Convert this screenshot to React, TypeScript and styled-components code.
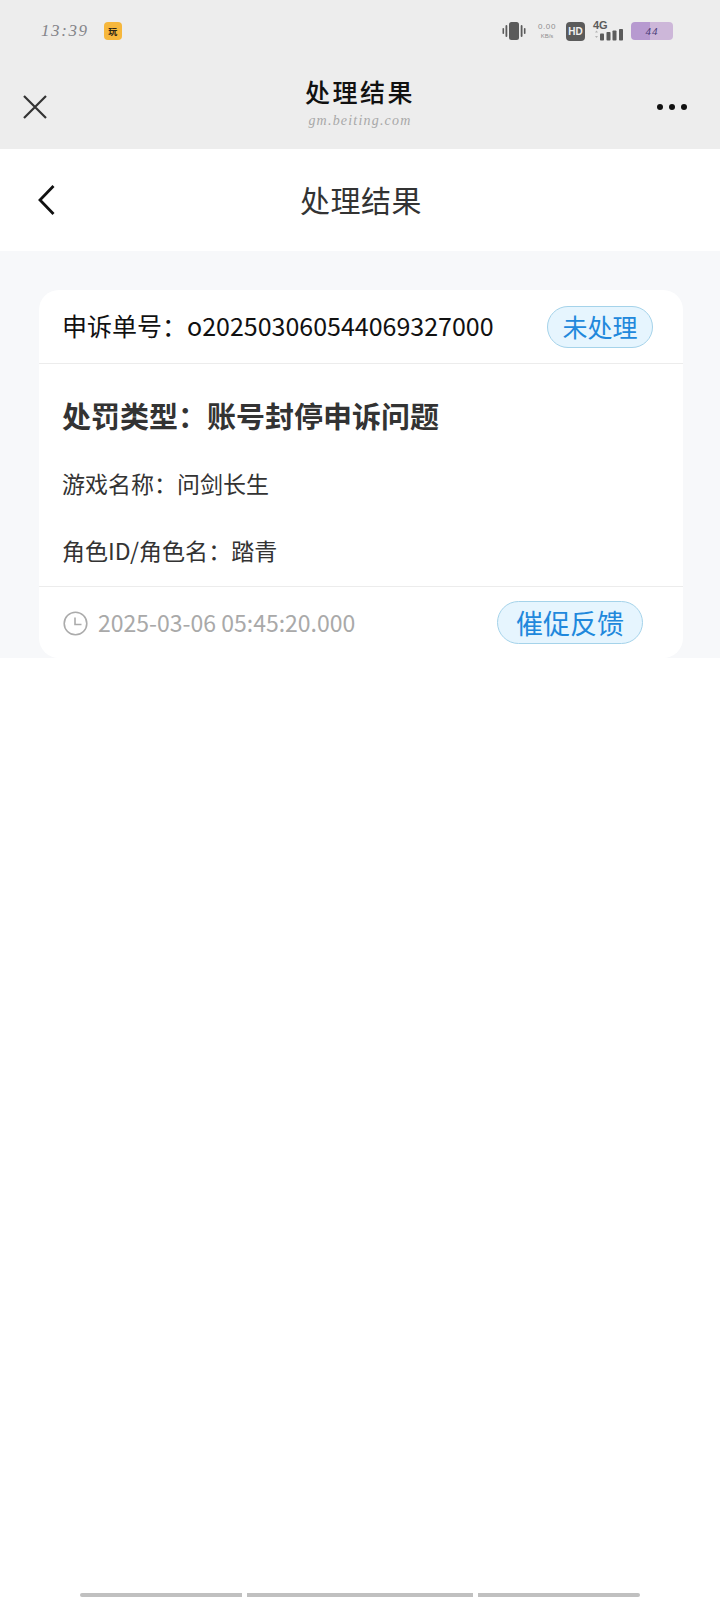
import React from "react";
import styled, { createGlobalStyle } from "styled-components";

const COLON = "\uFF1A";

const GlobalStyle = createGlobalStyle`
  html, body {
    margin: 0;
    padding: 0;
    background: #fff;
  }
  body {
    font-family: "Noto Sans CJK SC", "Noto Sans", sans-serif;
  }
`;

const Page = styled.div`
  width: 720px;
  height: 1600px;
  display: flex;
  flex-direction: column;
  overflow: hidden;
  background: #fff;
`;

const TopArea = styled.div`
  height: 149px;
  background: #ededed;
  display: flex;
  flex-direction: column;
`;

const StatusBar = styled.div`
  height: 60px;
  padding: 22px 47px 0 41px;
  box-sizing: border-box;
  display: flex;
  justify-content: space-between;
  align-items: flex-start;
`;

const StatusLeft = styled.div`
  display: flex;
  align-items: center;
  gap: 15px;
  height: 18px;
`;

const StatusRight = styled.div`
  display: flex;
  align-items: center;
  height: 18px;
  gap: 9px;
`;

const Clock = styled.span`
  font-family: "Liberation Serif", serif;
  font-style: italic;
  font-size: 17px;
  letter-spacing: 1.6px;
  color: #85858a;
  font-weight: 400;
`;

const AppBadge = styled.div`
  width: 18px;
  height: 18px;
  border-radius: 4px;
  background: #f6b73c;
  display: flex;
  align-items: center;
  justify-content: center;
  color: #2d2414;
  font-size: 9px;
  font-weight: 700;
  line-height: 1;
  overflow: hidden;
`;

const Speed = styled.div`
  width: 20px;
  display: flex;
  flex-direction: column;
  align-items: center;
  gap: 2px;
  margin: 0 0 0 2px;
  font-family: "Liberation Sans", sans-serif;
  color: #8d8d8d;
  line-height: 1;
`;

const SpeedValue = styled.span`
  font-size: 8px;
  letter-spacing: 0.6px;
`;

const SpeedUnit = styled.span`
  font-size: 6px;
`;

const HdBadge = styled.div`
  width: 19px;
  height: 19px;
  border-radius: 4px;
  background: #5b5b5b;
  color: #f0f0f0;
  display: flex;
  align-items: center;
  justify-content: center;
  font-family: "Liberation Sans", sans-serif;
  font-size: 10px;
  font-weight: 700;
`;

const Signal = styled.div`
  position: relative;
  width: 31px;
  height: 20px;
  margin: 0 -2px 0 -1px;
`;

const FourG = styled.span`
  position: absolute;
  left: 0;
  top: -2px;
  font-family: "Liberation Sans", sans-serif;
  font-size: 11px;
  font-weight: 700;
  color: #5b5b5b;
  line-height: 12px;
`;

const Battery = styled.div`
  width: 42px;
  height: 18px;
  border-radius: 4px;
  background: linear-gradient(90deg, #b79ad0 0 46%, #cdb7d9 46% 100%);
  display: flex;
  align-items: center;
  justify-content: center;
  font-family: "Liberation Serif", serif;
  font-style: italic;
  font-size: 11px;
  letter-spacing: 1px;
  color: #4a3a78;
`;

const NavBar = styled.div`
  flex: 1;
  display: grid;
  grid-template-columns: 1fr auto 1fr;
  align-items: center;
  padding: 0 33px 0 33px;
`;

const NavLeft = styled.div`
  display: flex;
  margin-left: -10px;
  padding-top: 5px;
`;

const NavRight = styled.div`
  display: flex;
  justify-content: flex-end;
  padding-top: 5px;
`;

const NavCenter = styled.div`
  display: flex;
  flex-direction: column;
  align-items: center;
  margin-top: -4px;
`;

const NavTitle = styled.div`
  font-size: 25px;
  font-weight: 500;
  line-height: 30px;
  letter-spacing: 2.5px;
  color: #111;
`;

const NavSub = styled.div`
  margin-top: 6px;
  font-family: "Liberation Serif", serif;
  font-style: italic;
  font-size: 14px;
  line-height: 18px;
  letter-spacing: 1.2px;
  color: #a8a8a8;
`;

const Dots = styled.div`
  display: flex;
  gap: 6px;
`;

const Dot = styled.span`
  width: 6px;
  height: 6px;
  border-radius: 50%;
  background: #111;
`;

const Header = styled.div`
  height: 102px;
  position: relative;
  display: flex;
  align-items: center;
  justify-content: center;
  background: #fff;
`;

const BackButton = styled.div`
  position: absolute;
  left: 36px;
  top: 35px;
  display: flex;
`;

const HeaderTitle = styled.h1`
  margin: -2px 0 0 2px;
  font-size: 30px;
  font-weight: 400;
  letter-spacing: 0.5px;
  color: #333;
  line-height: 44px;
`;

const Content = styled.div`
  height: 407px;
  padding: 39px 37px 0 39px;
  box-sizing: border-box;
  background: #f7f8fa;
`;

const Card = styled.div`
  height: 368px;
  background: #fff;
  border-radius: 20px;
  display: flex;
  flex-direction: column;
`;

const CardTop = styled.div`
  height: 74px;
  box-sizing: border-box;
  padding: 0 30px 4px 23px;
  display: flex;
  align-items: center;
  justify-content: space-between;
  border-bottom: 1px solid #ececec;
`;

const OrderNo = styled.div`
  font-size: 25px;
  color: #111;
  line-height: 36px;
`;

const Pill = styled.div<{ $large?: boolean }>`
  box-sizing: border-box;
  display: flex;
  align-items: center;
  justify-content: center;
  width: ${(p) => (p.$large ? "146px" : "106px")};
  height: ${(p) => (p.$large ? "43px" : "42px")};
  margin-top: ${(p) => (p.$large ? "2px" : "4px")};
  border-radius: 22px;
  border: 1px solid #a5d3ea;
  background: #e6f5fe;
  color: #2188dc;
  font-size: ${(p) => (p.$large ? "27px" : "25px")};
  line-height: 1;
`;

const CardBody = styled.div`
  flex: 1;
  padding: 0 23px;
  display: flex;
  flex-direction: column;
  border-bottom: 1px solid #ececec;
`;

const PunishType = styled.div`
  margin-top: 30px;
  font-size: 29px;
  line-height: 42px;
  font-weight: 700;
  color: #333;
`;

const InfoRow = styled.div`
  font-size: 23px;
  line-height: 36px;
  color: #333;
  margin-top: 31px;

  &:first-of-type {
    margin-top: 0;
  }
`;

const InfoList = styled.div`
  margin-top: 29px;
  display: flex;
  flex-direction: column;
`;

const CardBottom = styled.div`
  height: 71px;
  box-sizing: border-box;
  padding: 0 40px 2px 24px;
  display: flex;
  align-items: center;
  justify-content: space-between;
`;

const TimeWrap = styled.div`
  display: flex;
  align-items: center;
  gap: 10px;
  color: #a9a9a9;
  font-size: 23px;
  line-height: 36px;
`;

const ClockSvg = styled.svg`
  margin-top: 3px;
`;

const Spacer = styled.div`
  flex: 1;
`;

const TabBars = styled.div`
  display: flex;
  gap: 5px;
  padding: 0 0 3px 80px;
`;

const TabBar = styled.div<{ $w: number; $pos?: "left" | "right" }>`
  width: ${(p) => p.$w}px;
  height: 4px;
  background: #c0c0c0;
  border-radius: ${(p) =>
    p.$pos === "left" ? "2px 0 0 2px" : p.$pos === "right" ? "0 2px 2px 0" : "0"};
`;

const VibrateIcon = () => (
  <svg width="24" height="20" viewBox="0 0 24 20" fill="none">
    <rect x="7" y="1" width="10" height="18" rx="2.5" fill="#5b5b5b" />
    <rect x="3.5" y="4" width="1.8" height="12" rx="0.9" fill="#5b5b5b" />
    <rect x="18.7" y="4" width="1.8" height="12" rx="0.9" fill="#5b5b5b" />
    <rect x="0.5" y="7" width="1.6" height="6" rx="0.8" fill="#5b5b5b" />
    <rect x="21.9" y="7" width="1.6" height="6" rx="0.8" fill="#5b5b5b" />
  </svg>
);

const SignalBars = () => (
  <svg width="31" height="20" viewBox="0 0 31 20" fill="none">
    <path d="M2 11.5l1.5-2 1.5 2zM2 15l1.5 2 1.5-2z" fill="#b5b5b5" />
    <rect x="7" y="12.5" width="4" height="7" rx="0.8" fill="#5b5b5b" />
    <rect x="13.5" y="11" width="4" height="8.5" rx="0.8" fill="#5b5b5b" />
    <rect x="19.5" y="9.5" width="4" height="10" rx="0.8" fill="#5b5b5b" />
    <rect x="26" y="8" width="4" height="11.5" rx="0.8" fill="#5b5b5b" />
  </svg>
);

const CloseIcon = () => (
  <svg width="24" height="24" viewBox="0 0 24 24" fill="none">
    <path d="M1 1l22 22M23 1L1 23" stroke="#333" strokeWidth="2.2" />
  </svg>
);

const BackIcon = () => (
  <svg width="22" height="32" viewBox="0 0 22 32" fill="none">
    <path d="M17.5 2L4 16l13.5 14" stroke="#111" strokeWidth="2.8" />
  </svg>
);

const ClockIcon = () => (
  <ClockSvg width="25" height="25" viewBox="0 0 25 25" fill="none">
    <circle cx="12.5" cy="12.5" r="11.3" stroke="#ababab" strokeWidth="1.6" />
    <path d="M12 6.5v7h6.5" stroke="#ababab" strokeWidth="1.6" />
  </ClockSvg>
);

export default function App() {
  return (
    <Page>
      <GlobalStyle />
      <TopArea>
        <StatusBar>
          <StatusLeft>
            <Clock>13:39</Clock>
            <AppBadge>玩</AppBadge>
          </StatusLeft>
          <StatusRight>
            <VibrateIcon />
            <Speed>
              <SpeedValue>0.00</SpeedValue>
              <SpeedUnit>KB/s</SpeedUnit>
            </Speed>
            <HdBadge>HD</HdBadge>
            <Signal>
              <FourG>4G</FourG>
              <SignalBars />
            </Signal>
            <Battery>44</Battery>
          </StatusRight>
        </StatusBar>
        <NavBar>
          <NavLeft>
            <CloseIcon />
          </NavLeft>
          <NavCenter>
            <NavTitle>处理结果</NavTitle>
            <NavSub>gm.beiting.com</NavSub>
          </NavCenter>
          <NavRight>
            <Dots>
              <Dot />
              <Dot />
              <Dot />
            </Dots>
          </NavRight>
        </NavBar>
      </TopArea>
      <Header>
        <BackButton>
          <BackIcon />
        </BackButton>
        <HeaderTitle>处理结果</HeaderTitle>
      </Header>
      <Content>
        <Card>
          <CardTop>
            <OrderNo>申诉单号{COLON}o202503060544069327000</OrderNo>
            <Pill>未处理</Pill>
          </CardTop>
          <CardBody>
            <PunishType>处罚类型{COLON}账号封停申诉问题</PunishType>
            <InfoList>
              <InfoRow>游戏名称{COLON}问剑长生</InfoRow>
              <InfoRow>角色ID/角色名{COLON}踏青</InfoRow>
            </InfoList>
          </CardBody>
          <CardBottom>
            <TimeWrap>
              <ClockIcon />
              2025-03-06 05:45:20.000
            </TimeWrap>
            <Pill $large>催促反馈</Pill>
          </CardBottom>
        </Card>
      </Content>
      <Spacer />
      <TabBars>
        <TabBar $w={162} $pos="left" />
        <TabBar $w={226} />
        <TabBar $w={162} $pos="right" />
      </TabBars>
    </Page>
  );
}
